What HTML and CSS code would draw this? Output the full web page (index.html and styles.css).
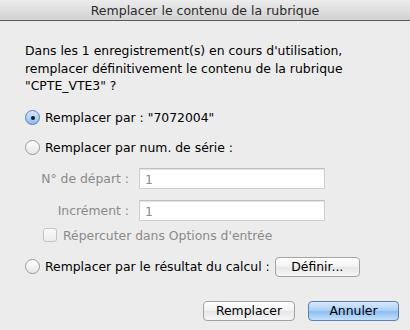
FILE: index.html
```html
<!DOCTYPE html>
<html lang="fr">
<head>
  <meta charset="UTF-8" />
  <title>Remplacer le contenu de la rubrique</title>
  <link rel="stylesheet" href="styles.css">
</head>
<body>
  <div class="window">
    <div class="titlebar">Remplacer le contenu de la rubrique</div>

    <div class="content">
      <p class="message">Dans les 1 enregistrement(s) en cours d'utilisation,<br>remplacer définitivement le contenu de la rubrique<br>"CPTE_VTE3" ?</p>

      <label class="option first">
        <span class="radio checked"></span>
        <span>Remplacer par : "7072004"</span>
      </label>

      <label class="option">
        <span class="radio"></span>
        <span>Remplacer par num. de série :</span>
      </label>

      <div class="fields">
        <div class="field">
          <span class="field-label">N° de départ :</span>
          <input type="text" value="1" disabled>
        </div>
        <div class="field">
          <span class="field-label">Incrément :</span>
          <input type="text" value="1" disabled>
        </div>
        <label class="check">
          <span class="box"></span>
          <span>Répercuter dans Options d'entrée</span>
        </label>
      </div>

      <div class="option calc">
        <span class="radio"></span>
        <span>Remplacer par le résultat du calcul :</span>
        <button class="btn small">Définir...</button>
      </div>

      <div class="actions">
        <button class="btn">Remplacer</button>
        <button class="btn default">Annuler</button>
      </div>
    </div>
  </div>
</body>
</html>
```

FILE: styles.css
```css
body { margin: 0; font-family: "DejaVu Sans", sans-serif; font-size: 12.4px; color: #000; }
.window { width: 410px; height: 330px; background: #ececec; overflow: hidden; }
.titlebar { height: 20px; line-height: 21px; text-align: center; font-size: 12.5px; color: #2a2a2a; background: linear-gradient(#ececec, #d2d2d2); border-bottom: 1px solid #5a5a5a; }
.content { padding: 21px 10px 0 25px; }
.message { margin: 0; line-height: 17.5px; }

.option { display: flex; align-items: center; gap: 5px; height: 16px; }
.option.first { margin-top: 15px; }
.option + .option { margin-top: 14px; }
.radio { width: 15px; height: 15px; border-radius: 50%; border: 1px solid #9a9a9a; background: linear-gradient(#ffffff, #e6e6e6); box-sizing: border-box; position: relative; flex: none; }
.radio.checked { border-color: #5a7fb0; background: linear-gradient(#d6e7fa, #8cbcf0); }
.radio.checked::after { content: ""; position: absolute; left: 4.5px; top: 4.5px; width: 4px; height: 4px; border-radius: 50%; background: #1a1a1a; }

.fields { padding-top: 12px; }
.field { display: flex; align-items: center; height: 21px; }
.field + .field { margin-top: 11px; }
.field-label { width: 104px; text-align: right; padding-right: 10px; color: #8a8a8a; }
.field input { width: 186px; height: 21px; box-sizing: border-box; border: 1px solid #cfcfcf; border-top-color: #bdbdbd; background: #fff; box-shadow: inset 0 1px 1px #e4e4e4; font: 12.4px "DejaVu Sans", sans-serif; color: #8a8a8a; padding: 2px 5px 0; }

.check { display: flex; align-items: center; gap: 6px; margin: 7px 0 0 18px; color: #8a8a8a; }
.box { width: 14px; height: 14px; border: 1px solid #c4c4c4; border-radius: 3px; background: linear-gradient(#fbfbfb, #ececec); box-sizing: border-box; }

.option.calc { margin-top: 14px; height: 20px; }
.btn { height: 20px; box-sizing: border-box; border: 1px solid #a3a3a3; border-radius: 4px; background: linear-gradient(#ffffff, #f1f1f1 50%, #e6e6e6 51%, #f6f6f6); font: 12.4px "DejaVu Sans", sans-serif; color: #000; padding: 0; }
.btn.small { width: 85px; }
.actions { display: flex; justify-content: flex-end; gap: 13px; margin: 24px 0 0; padding-right: 1px; }
.actions .btn { width: 92px; }
.btn.default { width: 91px; border-color: #5d7fae; background: linear-gradient(#d9eafc, #a6cdf5 50%, #8cbdf2 51%, #c3e0fb); }
```
